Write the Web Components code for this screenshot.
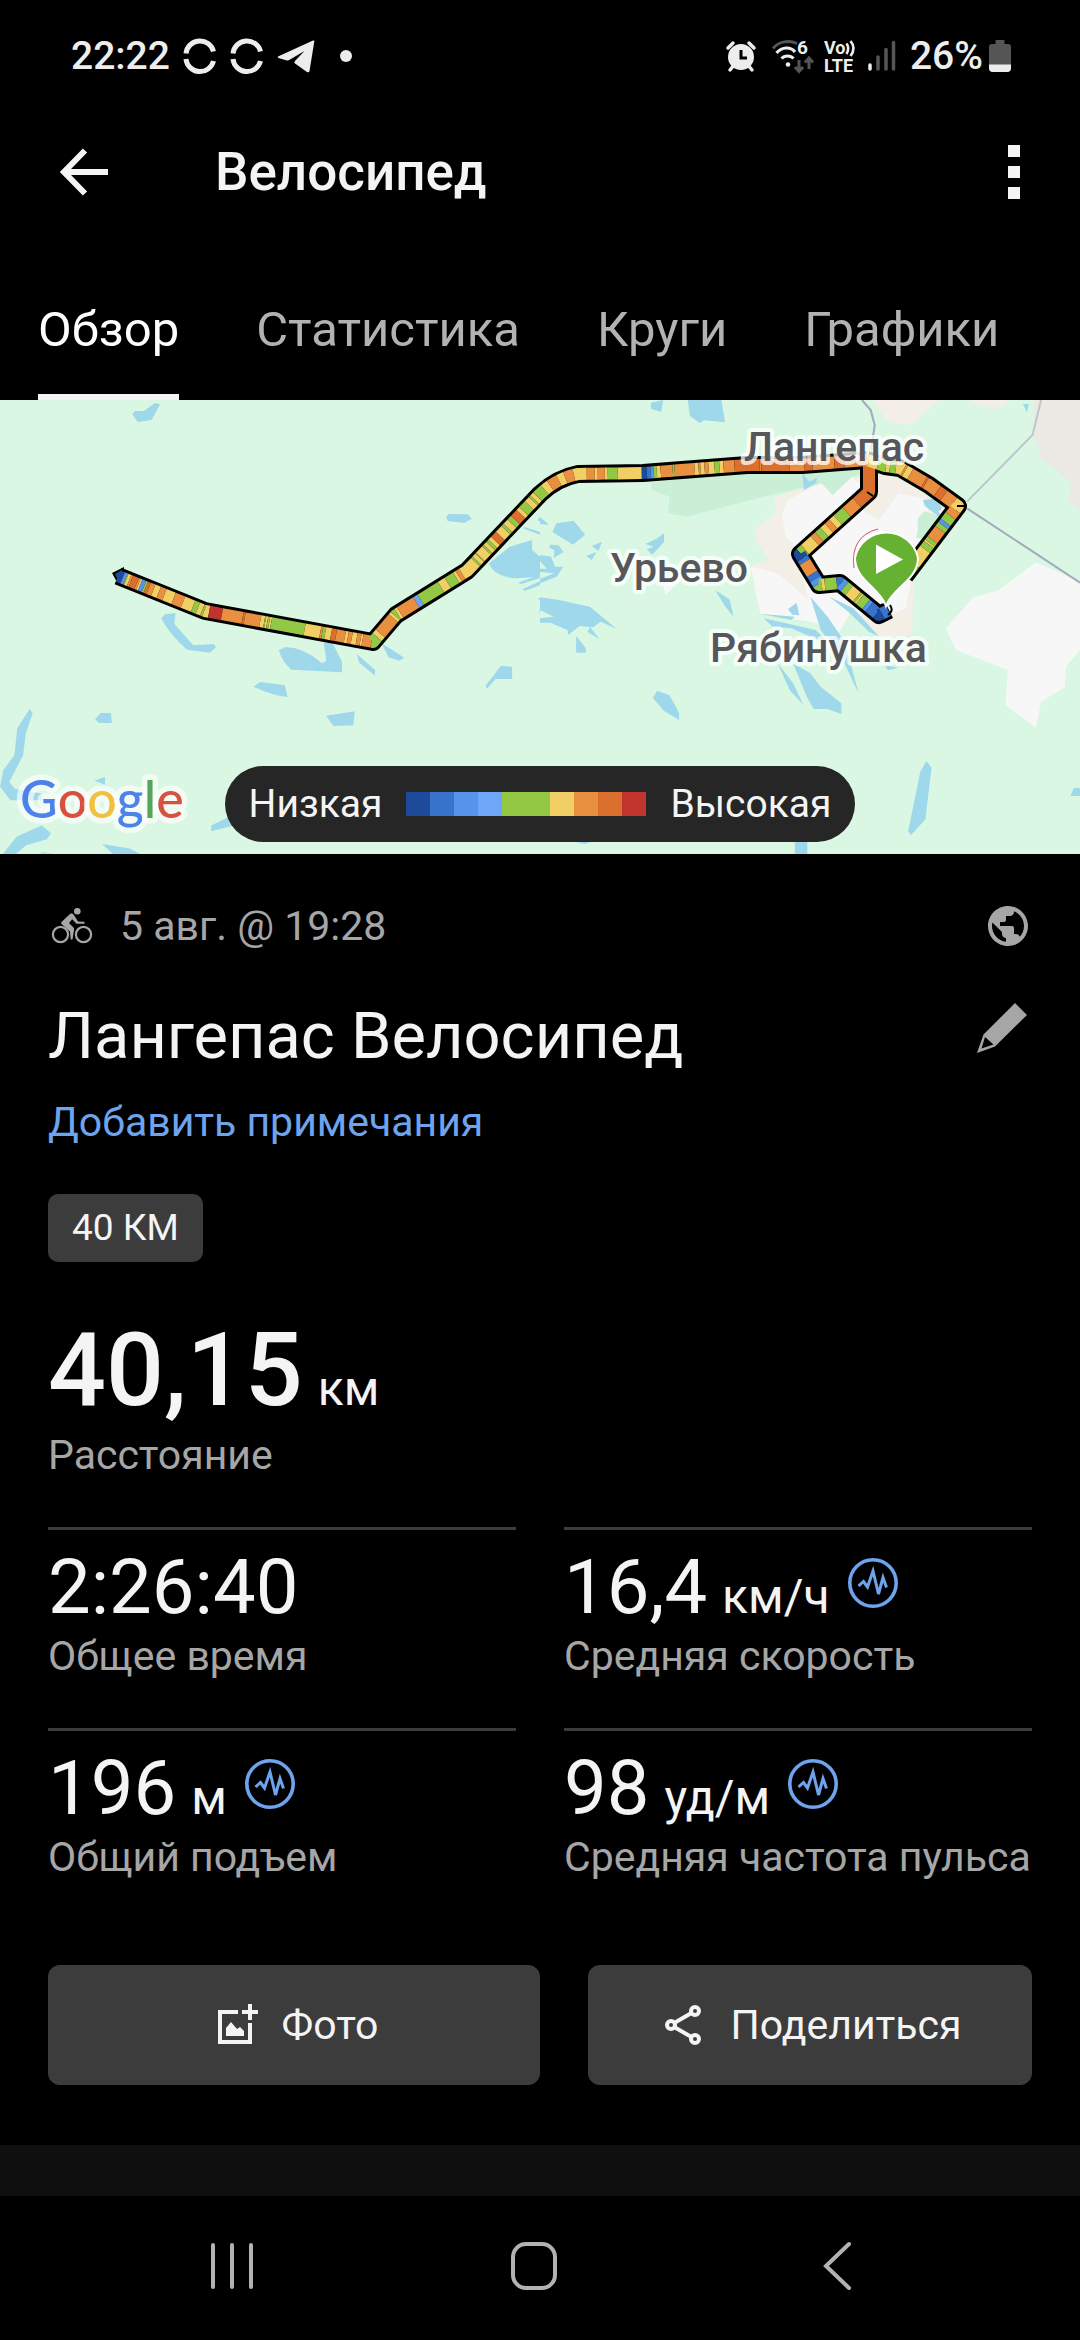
<!DOCTYPE html>
<html lang="ru">
<head>
<meta charset="utf-8">
<meta name="viewport" content="width=device-width">
<title>Велосипед</title>
<style>
html { background: #000; }
body {
  margin: 0;
  font-family: Roboto, "Liberation Sans", sans-serif;
  font-size: 41px;
  line-height: 48px;
  color: #f4f4f4;
  --muted: #a6a6a6;
  --accent: #6ea4ee;
  --surface: #3c3c3c;
}
</style>
</head>
<body>
<activity-page>
  <status-bar slot="top" time="22:22" battery="26%"></status-bar>
  <app-bar slot="top">Велосипед</app-bar>
  <tab-bar slot="top" items="Обзор,Статистика,Круги,Графики,Принадлежности"></tab-bar>
  <route-map slot="top">
    <map-legend low="Низкая" high="Высокая"></map-legend>
  </route-map>

  <activity-head>
    <span slot="date">5 авг. @ 19:28</span>
    <span slot="title">Лангепас Велосипед</span>
    <span slot="note">Добавить примечания</span>
    <span slot="badge">40 КМ</span>
  </activity-head>
  <stat-value class="main" value="40,15" unit="км">Расстояние</stat-value>
  <stat-grid>
    <stat-value value="2:26:40">Общее время</stat-value>
    <stat-value value="16,4" unit="км/ч" chart>Средняя скорость</stat-value>
    <stat-value value="196" unit="м" chart>Общий подъем</stat-value>
    <stat-value value="98" unit="уд/м" chart>Средняя частота пульса</stat-value>
  </stat-grid>
  <action-row>
    <action-button class="photo" icon="photo">Фото</action-button>
    <action-button class="share" icon="share">Поделиться</action-button>
  </action-row>

  <nav-bar slot="bottom"></nav-bar>
</activity-page>

<script>
(function() {
  // name: [width, height, viewBox, markup]
  const ICONS = {
    sync: [34, 34, '0 0 34 34', '<path d="M3 14.500a14 14 0 0 1 27.500-2M3 20a14 14 0 0 0 27.500 2" fill="none" stroke="currentColor" stroke-width="5"/>'],
    plane: [38, 34, '0 0 38 34', '<path d="M1 17.500 36 1.500q1.500-.5 1.300 1L32.500 32q-.5 2-2.500 1L18 24.500q-1.500-1 0-2.500L27.500 12 13 20.500q-2 1.300-4 .7L1.500 19q-1.500-.7-.5-1.500z" fill="currentColor"/>'],
    dot: [12, 12, '0 0 12 12', '<circle cx="6" cy="6" r="6" fill="currentColor"/>'],
    alarm: [30, 30, '0 0 30 30', '<circle cx="15" cy="16" r="13" fill="currentColor"/><path d="M2 7 7 2M28 7l-5-5M4 29l4-5M26 29l-4-5" stroke="currentColor" stroke-width="3.500" stroke-linecap="round"/><path d="M15 9v8h6" fill="none" stroke="#000" stroke-width="3"/>'],
    wifi: [44, 34, '-3 0 44 34', '<g fill="none" stroke-width="3"><path d="M2 9.500C8 2 18 1 26 4.500" stroke="#555"/><path d="M5.500 14C11 7.500 20 7.500 24 13M10.500 19.500c3-3.500 9-3.500 12 0" stroke="#ededed"/></g><circle cx="17" cy="25.500" r="2.300" fill="#ededed"/><path d="M28 21v11M24 28l4 4.500 4-4.500M38 30V20M34 23.500l4-4.500 4 4.500" fill="none" stroke="#555" stroke-width="3"/><text x="26" y="15" font-size="19" font-weight="700" fill="#ededed">6</text>'],
    volte: [32, 34, '0 0 32 34', '<g fill="currentColor" font-weight="700"><text x="0" y="15" font-size="18">Vo</text><text x="0" y="32.500" font-size="18">LTE</text></g><path d="M22.500 4.500q3.500 4.500 0 10.500M26.500 2q6 7 0 15" fill="none" stroke="currentColor" stroke-width="2.600"/>'],
    signal: [30, 32, '0 0 30 32', '<g stroke-width="3.500" stroke-linecap="round"><path d="M2 25v4" stroke="#ededed"/><path d="M10 17v12M18 9.500V29M25.500 2.500V29" stroke="#555"/></g>'],
    battery: [22, 32, '0 0 22 32', '<path d="M6.500 0h9v4H19q3 0 3 3v21q0 4-4 4H4q-4 0-4-4V7q0-3 3-3h3.500z" fill="#555"/><path d="M0 24.500h22V28q0 4-4 4H4q-4 0-4-4z" fill="#ededed"/>'],
    back: [48, 48, '0 0 48 48', '<path d="M25 2.500 4 24l21 21.500M3 24h45" fill="none" stroke="currentColor" stroke-width="6"/>'],
    more: [12, 54, '0 0 12 54', '<path d="M0 0h12v12H0zM0 21h12v12H0zM0 42h12v12H0z" fill="currentColor"/>'],
    bike: [48, 48, '0 0 48 48', '<g fill="none" stroke="currentColor" stroke-width="2.200"><circle cx="12.500" cy="32.500" r="7.600"/><circle cx="35.500" cy="32.500" r="7.600"/></g><circle cx="29.300" cy="9.300" r="3.300" fill="currentColor"/><path d="M22.500 11.500q2-.5 3.200 1.200l4.300 6.800 6.500.3v2H28.500l-4.300-4.500-3.200 3.700 4.500 4.500q.8 1 .6 2l-1.600 10h-1.800l-.7-8-8.500-7.500q-.8-1 0-2z" fill="currentColor"/>'],
    globe: [48, 48, '0 0 24 24', '<path fill="currentColor" d="M12 2C6.480 2 2 6.480 2 12s4.480 10 10 10 10-4.480 10-10S17.520 2 12 2zm-1 17.930c-3.950-.49-7-3.850-7-7.930 0-.62.080-1.210.210-1.790L9 15v1c0 1.100.9 2 2 2v1.930zm6.900-2.540c-.26-.81-1-1.390-1.900-1.390h-1v-3c0-.55-.45-1-1-1H8v-2h2c.55 0 1-.45 1-1V7h2c1.100 0 2-.9 2-2v-.41c2.930 1.190 5 4.060 5 7.410 0 2.080-.8 3.970-2.100 5.390z"/>'],
    pencil: [50, 50, '0 0 50 50', '<path fill="currentColor" fill-rule="evenodd" d="M38 0 50 12 18 43.500 0 50 6.500 31.500zM8 34 4.500 45.500 16.500 41.500z"/>'],
    chart: [50, 50, '0 0 50 50', '<circle cx="25" cy="25" r="23.200" fill="none" stroke="currentColor" stroke-width="3.600"/><path d="m10.500 28 5-4.500 4 5.500 5.500-16 5.500 23 4.500-16.500 3.500 10" fill="none" stroke="currentColor" stroke-width="3"/>'],
    photo: [48, 48, '0 0 48 48', '<path d="M28 11H10v30h30V22" fill="none" stroke="currentColor" stroke-width="4"/><path d="M38 3h4v6h6v4h-6v6h-4v-6h-6V9h6z" fill="currentColor"/><path d="M16 35v-8l5-6 6 7 3-2 4 4v5z" fill="currentColor"/>'],
    share: [48, 48, '0 0 48 48', '<g fill="none" stroke="currentColor" stroke-width="4"><circle cx="12" cy="24" r="4"/><circle cx="36" cy="10" r="4"/><circle cx="36" cy="38" r="4"/><path d="m16 21.500 16.500-9.500M16 26.500 32.500 36"/></g>'],
    recents: [46, 48, '0 0 46 48', '<path d="M4 3v42M23 3v42M42 3v42" stroke="currentColor" stroke-width="4" stroke-linecap="round"/>'],
    home: [46, 48, '0 0 46 48', '<rect x="2" y="2" width="42" height="44" rx="13" fill="none" stroke="currentColor" stroke-width="4"/>'],
    prev: [28, 48, '0 0 28 48', '<path d="M26 2 3 24l23 22" fill="none" stroke="currentColor" stroke-width="4" stroke-linecap="round"/>']
  };

  function icon(name) {
    const [w, h, box, body] = ICONS[name];
    return `<svg width="${w}" height="${h}" viewBox="${box}" aria-hidden="true">${body}</svg>`;
  }

  const RESET = `
    svg { display: block; flex: none; overflow: visible; }
    button, a {
      font: inherit;
      color: inherit;
      background: none;
      border: 0;
      padding: 0;
      margin: 0;
      text-decoration: none;
      cursor: pointer;
    }
  `;

  class BaseElement extends HTMLElement {
    connectedCallback() {
      if (this.shadowRoot) return;
      const shadowRoot = this.attachShadow({mode: 'open'});
      shadowRoot.innerHTML = `<style>${RESET}</style>` + this.template;
    }
  }

  customElements.define('activity-page', class extends BaseElement {
    get template() {
      return `
<style>
:host { display: flex; flex-direction: column; min-height: 100vh; }
main { padding: 48px 48px 60px; }
.next { flex: 1; background: #0f0f0f; }
</style>
<slot name="top"></slot>
<main><slot></slot></main>
<div class="next"></div>
<slot name="bottom"></slot>
`;
    }
  });

  customElements.define('status-bar', class extends BaseElement {
    get template() {
      return `
<style>
:host {
  display: flex;
  justify-content: space-between;
  align-items: center;
  height: 112px;
  padding: 0 69px 0 71px;
  color: #ededed;
  font-size: 39px;
  font-weight: 500;
}
div { display: flex; align-items: center; gap: 13px; }
.right { gap: 12px; }
.level { display: flex; align-items: center; gap: 6px; }
.dot { padding-left: 12px; }
</style>
<div>
  <span>${this.getAttribute('time')}</span>
  ${icon('sync')}${icon('sync')}${icon('plane')}
  <span class="dot">${icon('dot')}</span>
</div>
<div class="right">
  ${icon('alarm')}${icon('wifi')}${icon('volte')}${icon('signal')}
  <span class="level">${this.getAttribute('battery')}${icon('battery')}</span>
</div>
`;
    }
  });

  customElements.define('app-bar', class extends BaseElement {
    get template() {
      return `
<style>
:host { display: flex; align-items: center; height: 120px; padding: 0 60px; }
h1 { flex: 1; margin: 0 0 0 107px; font-size: 53px; line-height: 64px; font-weight: 500; }
</style>
<button aria-label="Назад">${icon('back')}</button>
<h1><slot></slot></h1>
<button aria-label="Меню">${icon('more')}</button>
`;
    }
  });

  customElements.define('tab-bar', class extends BaseElement {
    get template() {
      const tabs = this.getAttribute('items').split(',').map((t, i) =>
        `<button role="tab" aria-selected="${i === 0}">${t}</button>`).join('');
      return `
<style>
:host { display: block; overflow: hidden; }
div { display: flex; gap: 77px; padding: 70px 38px 0; }
button {
  flex: none;
  padding-bottom: 36px;
  border-bottom: 6px solid transparent;
  font-size: 49px;
  line-height: 56px;
  color: #b2b2b2;
}
button[aria-selected=true] { color: #fff; border-color: #f4f4f4; }
</style>
<div role="tablist">${tabs}</div>
`;
    }
  });

  // heat colours: low (n) to high (r)
  const HEAT = {
    n: '#1d4a9b', m: '#3873cc', b: '#5594ea', l: '#6ea7f8', g: '#93c844',
    y: '#f2cf64', o: '#e98f40', d: '#da6f2e', r: '#c1332d'
  };

  // each run is a colour key and the distance at which it ends
  const TRACKS = [
    {
      d: 'M869 60V92L800 154 819 185 840 183 879 215 889 210',
      runs: 'd48 o62 g74 y80 o86 y92 g99 o105 y118 g124 n130 m134 o148 m154 b160 g164 y167 g179 m183 b188 g194 y204 g206 y208 g216 b220 m230 n236 m243'
    },
    {
      d: 'M867 60 885 66 900 68 929 85 958 106 905 176',
      runs: 'y12 g20 y24 g30 y38 o40 y46 o62 d64 o78 d86 o98 y108 o116 g124 b128 g133 o146 g150 y152 g158 y176 g192'
    },
    {
      d: 'M118 176 205 211 373 242 396 215 467 171 540 94Q557 78 578 74L643 73 747 65 802 65 867 60',
      runs: 'n5 b8 g9 y12 o14 d20 o22 y24 b28 g30 d33 o38 y44 o50 y60 o70 y81 g86 y91 g93 y98 r111 o132 d134 o150 y154 g155 y157 g159 y161 g195 y211 o213 g216 y222 d227 o236 y239 o243 y248 o252 y254 o263 g271 y276 o296 y299 g302 y305 o324 l329 g353 y361 g371 y374 o378 y396 g398 y402 g403 y412 g414 y418 g421 y425 d432 y440 g443 y449 g454 d462 y466 g474 y480 g482 y486 g496 y503 o513 y520 o529 y542 o550 y553 o560 y563 g573 y597 n602 m606 b609 g612 y616 o628 g630 o650 y654 o656 y660 o664 y670 g675 y679 o690 d715 o717 d745 o760 d768 o790 d800 o840'
    }
  ];

  function trackColours(track) {
    let from = 0;
    return track.runs.split(' ').map(run => {
      const to = Number(run.slice(1));
      const path = `<path d="${track.d}" stroke="${HEAT[run[0]]}" stroke-dasharray="0 ${from} ${to - from} 2000"/>`;
      from = to;
      return path;
    }).join('');
  }

  customElements.define('route-map', class extends BaseElement {
    get template() {
      return `
<style>
:host { display: block; position: relative; background: #daf7e3; }
.map { width: 100%; height: auto; overflow: hidden; }
.place { font-size: 41px; font-weight: 500; fill: #57575b; stroke: #fff; stroke-opacity: .75; stroke-width: 8px; stroke-linejoin: round; paint-order: stroke; }
.brand { font-family: Lato, sans-serif; font-size: 52px; font-weight: 500; stroke: #fff; stroke-opacity: .65; stroke-width: 11px; stroke-linejoin: round; paint-order: stroke; }
::slotted(map-legend) { position: absolute; left: 0; right: 0; bottom: 12px; margin: 0 auto; }
</style>
<svg class="map" viewBox="0 0 1080 454" role="img" aria-label="Карта маршрута">
  <rect width="1080" height="454" fill="#daf7e3"/>
  <!-- west half -->
  <g transform="scale(.3444 .3333)" fill="#9fd8eb">
    <path d="M384 42 392 33 418 33 450 9 465 13 440 60 400 66zM1295 352l8-10 55 1 12 13-22 13-48-6zM467 657l12-14 31-4-4 32 55 65 60-4 6 10-18 16-66-9q-50-45-76-96zM810 750l20-9q55 3 103 47 16 0 14-12l-7-48 26 2 27 55v32l-147-8q-30-28-36-59zM1108 730l66 43-14 9-32-10zM1036 762l53 48v17l-46-39zM736 860l20-14 71 10 8 35q-45-5-99-31zM1410 857l44-59 33 2v37h-48l-25 29zM947 947l83-13-4 42-58 2zM276 957l17-18h29l3 30h-38z"/>
    <path d="m86 927 9 13-20 60-8 66-40 80 16 20 80 15v20H30L0 1160l10-50 32-45 8-80zM274 1142l31-12v24zM613 1277l70-35v34l-70 18zM8 1362l41-52 72-33 27 23-12 18-60 18-30 26zM296 1332l80 14 32 16h-80zM115 1360l10-4 28 6zM1420 490l60-50 65-20v30l23 20v60l-70 5q-65-5-78-45zM1504 548l64-24v10l-54 18zM1516 568l52-24v12l-44 16zM1520 380l48 16v8l-46-18zM1562 355h6v8h-6zM1562 595h6v8zM1565 630l3-1v18z"/>
  </g>
  <!-- east half: town, forest, roads -->
  <g transform="translate(540) scale(.3444 .3333)">
    <path fill="#c9efd6" d="M320 248 640 205 930 190 960 212 905 232 690 280 425 350 372 340 376 290 325 270z"/>
    <path fill="#f3efe6" d="M965 0h195L1075 75 1010 65zM1250 0h115l-25 22-60-2zM680 290 820 250 1000 215 1100 270 1190 340 1085 520 1080 705 985 710 960 690 900 640 780 660 690 640 635 628 612 500 665 480 625 415 625 385 685 340z"/>
    <path fill="#ece9e4" d="M1435 0h133v330l-35-30 10-50-90-80-20-70z"/>
    <path fill="#f7f7f7" d="M720 300 815 250 850 285 905 232 930 250 920 320 985 360 1040 280 1135 300 1110 390 1062 625 1010 650 900 640 860 715 800 668 640 642 612 500 690 520 780 600 740 440 712 405 703 340zM1440 487 1568 545V750L1527 800 1524 862 1455 905 1440 984 1352 915 1358 810 1208 750 1178 684 1260 590 1330 572zM355 545l70-22-60 62z"/>
    <path fill="#c9efd6" d="M818 250 850 285 905 232 890 215zM1097 355l20-22 50 20-60 62-15 0 5-25z"/>
    <g fill="none" stroke-width="6">
      <path stroke="#a4a9c0" d="M935 0 960 30 972 75 955 190M1240 325 1568 548"/>
      <path stroke="#bfc6cf" d="M1455 0 1430 105 1240 305"/>
    </g>
    <g fill="#9fd8eb">
      <path d="M322 8 358 0 352 36 322 26zM429 0h98l10 67-60-6-14 8-28-22zM1402 12h18l-6 25zM762 220l20 25 22-12-2 16-36 22zM1112 300l40-5 15 30-10 10 30 40-70-58zM0 350l26 25-26-3zM48 370l50-8 33 42-35 30-60-38zM360 400v26l-34 38-16-16 20-8-24-8 32-16zM180 425l-10 28-20-15zM134 468l30-12-14 24zM28 434l26 2 14 20-28 18 2-24-14-6zM0 465l32 5 12 30h24l-20 30-48 20v-14l42-16-42-4v-10l20 0-20-22z"/>
      <path d="M0 592 55 600 145 620 222 686 176 665 155 682 115 678 82 705 80 690 30 668H0V655L40 650 0 630zM145 680l28 38-35-22zM105 708l28 36v14h-28zM508 570l42 28 12 52-25-32zM720 628l25-20 8 38-20-2zM840 590l70 35 75 85-30-15-60-60zM785 590l50 60 50 75 40 155-50-110-60-80zM650 655l150 35 50 50-120-55-55-5zM640 642l100 8-10 10zM690 790l45 60 30 65-40-45zM735 790l50 30 30 40 60 50v32l-40-15-40 0-20-35zM1000 795l40 8-30 8zM328 894l12-22 36 14 28 52v22l-45-28zM1122 1083l15 20-18 155-42 48-8-12 35-178zM1540 1188l10-24h18v24zM740 1320h36v42h-36zM98 1325h52l-20 7z"/>
    </g>
  </g>
  <g fill="none" stroke-linejoin="round">
    <g stroke="#000" stroke-width="18">
      ${TRACKS.map(t => `<path d="${t.d}"/>`).join('')}
    </g>
    <path d="M112 173 124 167 124 187 118 184z" fill="#000"/>
    <path d="M115 174 122 170 119 182z" fill="#1d4a9b"/>
    <g stroke-width="12">${TRACKS.map(trackColours).join('')}</g>
    <path d="m867 92 6 4M957 106h8M890 205q4 6-2 10" stroke="#000" stroke-width="2"/>
  </g>
  <text class="place" x="744" y="61">Лангепас</text>
  <text class="place" x="610" y="182">Урьево</text>
  <text class="place" x="710" y="262">Рябинушка</text>
  <path d="M883 204C872 184 853 175 853 158A32 31 0 0 1 915 152z" fill="#fff"/>
  <path d="M854 168Q850 136 878 129" fill="none" stroke="#d4506a" stroke-width="1"/>
  <path d="M886 206C880 188 855 180 855 158A32 31 0 0 1 918 158C918 180 892 188 886 206z" fill="#67b132" stroke="#fff" stroke-width="2"/>
  <path d="M876 144.500 903 159.500 876 174z" fill="#fff"/>
  <text class="brand" x="20" y="418"><tspan fill="#4c82ea">G</tspan><tspan fill="#d8503f">o</tspan><tspan fill="#f0c040">o</tspan><tspan fill="#4c82ea">g</tspan><tspan fill="#57a55a">l</tspan><tspan fill="#d8503f">e</tspan></text>
</svg>
<slot></slot>
`;
    }
  });

  customElements.define('map-legend', class extends BaseElement {
    get template() {
      const steps = ['n', 'm', 'b', 'l', 'g', 'g', 'y', 'o', 'd', 'r'];
      const stops = steps.map((s, i) => `${HEAT[s]} ${i * 10}% ${i * 10 + 10}%`).join(', ');
      return `
<style>
:host {
  display: flex;
  align-items: center;
  gap: 24px;
  width: max-content;
  padding: 14px 24px;
  border-radius: 38px;
  background: #262626;
  font-size: 39px;
  white-space: nowrap;
}
.scale { width: 240px; height: 24px; background: linear-gradient(90deg, ${stops}); }
</style>
<span>${this.getAttribute('low')}</span>
<span class="scale"></span>
<span>${this.getAttribute('high')}</span>
`;
    }
  });

  customElements.define('activity-head', class extends BaseElement {
    get template() {
      return `
<style>
:host { display: block; }
.row { display: flex; align-items: center; justify-content: space-between; }
.date { display: flex; gap: 24px; }
.meta, .edit { color: var(--muted); }
.title { margin: 48px 0 24px; }
h2 { margin: 0; font-size: 65px; line-height: 76px; font-weight: 400; }
.edit { padding: 0 5px 16px; }
.note { color: var(--accent); }
.badge {
  display: table;
  margin: 48px 0 56px;
  padding: 10px 24px;
  border-radius: 10px;
  background: var(--surface);
  font-size: 37px;
}
</style>
<div class="row meta">
  <span class="date">${icon('bike')}<slot name="date"></slot></span>
  ${icon('globe')}
</div>
<div class="row title">
  <h2><slot name="title"></slot></h2>
  <button class="edit" aria-label="Изменить">${icon('pencil')}</button>
</div>
<a class="note" href="#note"><slot name="note"></slot></a>
<div class="badge"><slot name="badge"></slot></div>
`;
    }
  });

  customElements.define('stat-grid', class extends BaseElement {
    get template() {
      return `
<style>
:host { display: grid; grid-template-columns: 1fr 1fr; gap: 48px; margin: 48px 0 84px; }
::slotted(*) { padding-top: 15px; border-top: 3px solid var(--surface); }
</style>
<slot></slot>
`;
    }
  });

  customElements.define('stat-value', class extends BaseElement {
    get template() {
      return `
<style>
:host { display: block; min-width: 0; }
.value { display: flex; align-items: baseline; gap: 15px; font-size: 76px; line-height: 84px; }
:host(.main) .value { margin-bottom: 9px; font-size: 102px; line-height: 104px; font-weight: 500; }
.unit { font-size: 48px; line-height: 56px; font-weight: 400; }
.chart { align-self: center; margin: 0 0 8px 3px; color: var(--accent); }
.label { margin-top: 3px; color: var(--muted); white-space: nowrap; }
</style>
<div class="value">
  <span>${this.getAttribute('value')}</span>
  ${this.hasAttribute('unit') ? `<span class="unit">${this.getAttribute('unit')}</span>` : ''}
  ${this.hasAttribute('chart') ? `<button class="chart" aria-label="График">${icon('chart')}</button>` : ''}
</div>
<div class="label"><slot></slot></div>
`;
    }
  });

  customElements.define('action-row', class extends BaseElement {
    get template() {
      return `
<style>
:host { display: flex; gap: 48px; }
::slotted(*) { flex: 37 1 0; }
::slotted(.photo) { flex-grow: 41; }
</style>
<slot></slot>
`;
    }
  });

  customElements.define('action-button', class extends BaseElement {
    get template() {
      return `
<style>
:host { display: block; }
button {
  display: flex;
  align-items: center;
  justify-content: center;
  gap: 24px;
  width: 100%;
  height: 120px;
  border-radius: 12px;
  background: var(--surface);
}
</style>
<button>${icon(this.getAttribute('icon'))}<slot></slot></button>
`;
    }
  });

  customElements.define('nav-bar', class extends BaseElement {
    get template() {
      return `
<style>
:host {
  display: grid;
  grid-template-columns: repeat(3, 1fr);
  justify-items: center;
  align-items: center;
  height: 140px;
  padding: 0 92px 4px 81px;
  color: #b2b2b2;
}
</style>
<button aria-label="Недавние">${icon('recents')}</button>
<button aria-label="Домой">${icon('home')}</button>
<button aria-label="Назад">${icon('prev')}</button>
`;
    }
  });
})();
</script>
</body>
</html>
